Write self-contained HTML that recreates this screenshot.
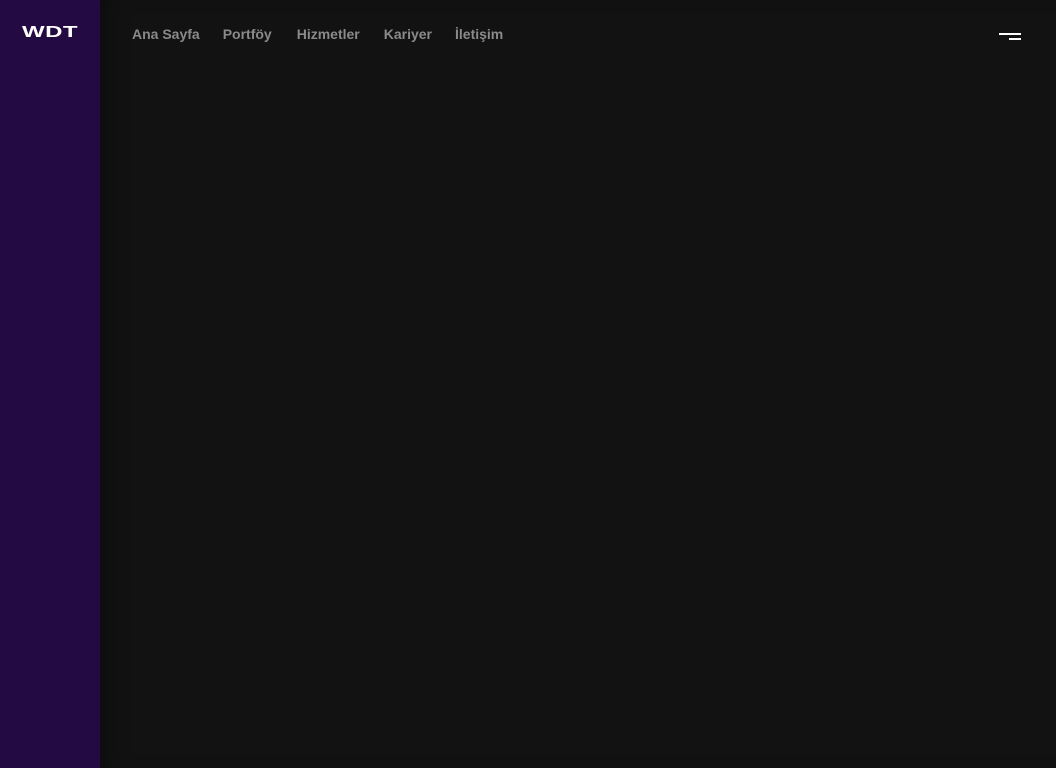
<!DOCTYPE html>
<html><head><meta charset="utf-8"><style>
html,body{margin:0;padding:0;width:1056px;height:768px;overflow:hidden;background:#121212;font-family:"Liberation Sans",sans-serif}
.side{position:absolute;left:0;top:0;width:100px;height:768px;background:#240a42}
.main{position:absolute;left:100px;top:0;width:956px;height:768px;background:#121212;box-shadow:inset 18px 0 24px -12px rgba(0,0,0,.35)}
.logo{position:absolute;left:22px;top:24px;color:#fff;font-weight:900;font-size:16px;letter-spacing:0.3px;transform:scaleX(1.5);transform-origin:left}
nav{position:absolute;left:132px;top:26px;font-weight:bold;font-size:14px;color:#8a8a8a}
.b{position:absolute;background:#fff;height:2px}
</style></head><body>
<div class="side"></div><div class="main"></div>
<div class="logo">WDT</div>
<nav><span style="margin-right:23px">Ana Sayfa</span><span style="margin-right:25px">Portföy</span><span style="margin-right:24px">Hizmetler</span><span style="margin-right:23px">Kariyer</span><span>İletişim</span></nav>
<div class="b" style="left:999px;top:33px;width:22px"></div>
<div class="b" style="left:1009px;top:38px;width:12px"></div>
</body></html>
